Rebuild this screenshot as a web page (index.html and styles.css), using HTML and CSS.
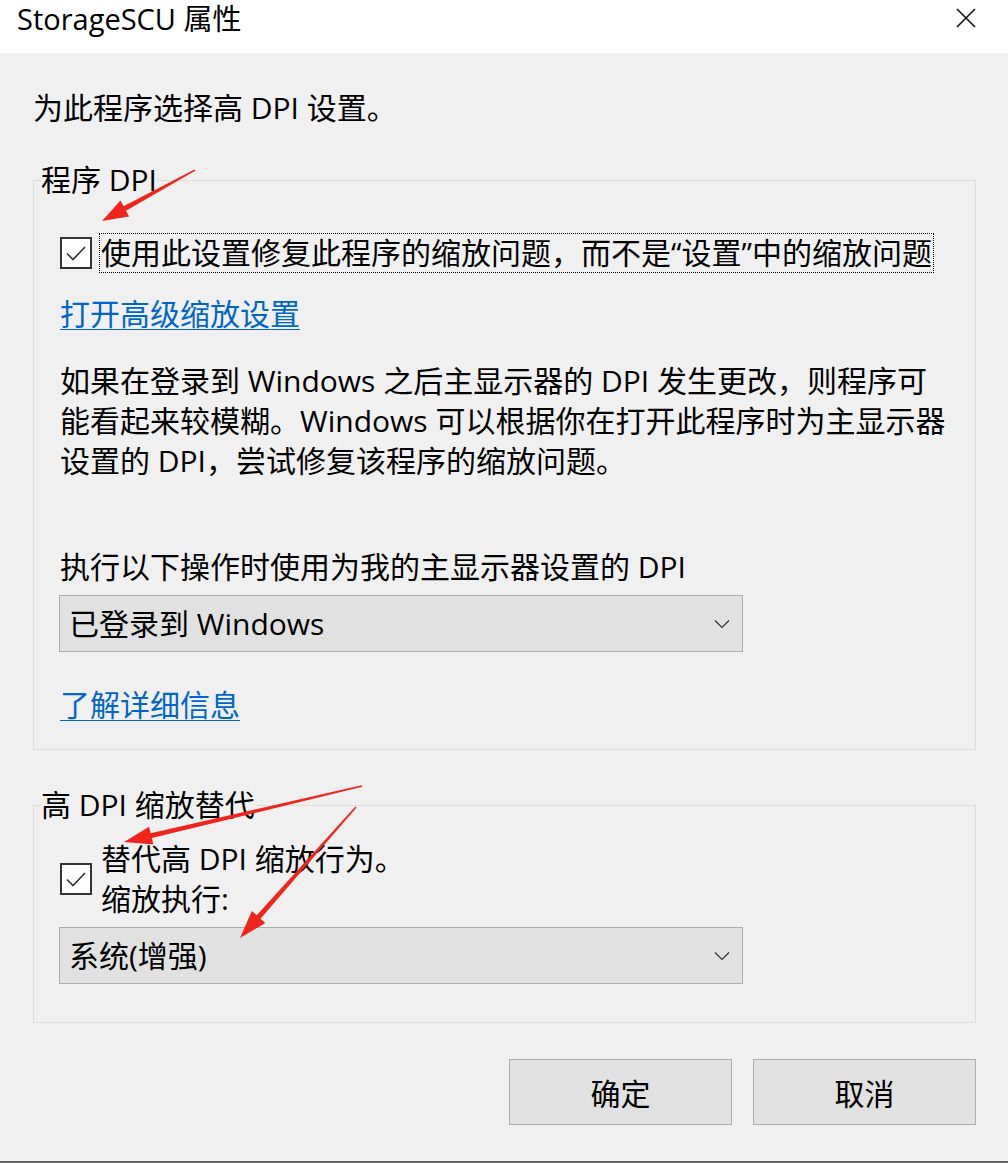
FILE: index.html
```html
<!DOCTYPE html>
<html lang="zh-CN">
<head>
<meta charset="utf-8">
<title>StorageSCU 属性</title>
<link rel="stylesheet" href="styles.css">
</head>
<body>
<div class="window">
  <div class="titlebar">
    <span class="title">StorageSCU 属性</span>
    <svg class="close" width="20" height="20" viewBox="0 0 20 20"><path d="M1 1 L19 19 M19 1 L1 19" stroke="#111" stroke-width="1.6" fill="none"/></svg>
  </div>
  <div class="content">
    <p class="intro">为此程序选择高 DPI 设置。</p>

    <fieldset class="group group-dpi">
      <legend class="legend">程序 DPI</legend>
      <div class="check-row">
        <span class="checkbox"><svg width="32" height="32" viewBox="0 0 32 32"><rect x="1" y="1" width="30" height="30" fill="#fff" stroke="#333" stroke-width="2"/><path d="M7 16.5 L13 22.5 L25 10" stroke="#333" stroke-width="1.6" fill="none"/></svg></span>
        <span class="check-label focus">使用此设置修复此程序的缩放问题，而不是“设置”中的缩放问题</span>
      </div>
      <a class="link link-adv" href="#">打开高级缩放设置</a>
      <p class="para">如果在登录到 Windows 之后主显示器的 DPI 发生更改，则程序可<br>能看起来较模糊。Windows 可以根据你在打开此程序时为主显示器<br>设置的 DPI，尝试修复该程序的缩放问题。</p>
      <p class="label">执行以下操作时使用为我的主显示器设置的 DPI</p>
      <div class="select">
        <span class="select-text">已登录到 Windows</span>
        <svg class="chev" width="16" height="10" viewBox="0 0 16 10"><path d="M1 1.5 L8 8.5 L15 1.5" stroke="#333" stroke-width="1.2" fill="none"/></svg>
      </div>
      <a class="link link-more" href="#">了解详细信息</a>
    </fieldset>

    <fieldset class="group group-override">
      <legend class="legend">高 DPI 缩放替代</legend>
      <div class="check-row check-row-2">
        <span class="checkbox"><svg width="32" height="32" viewBox="0 0 32 32"><rect x="1" y="1" width="30" height="30" fill="#fff" stroke="#333" stroke-width="2"/><path d="M7 16.5 L13 22.5 L25 10" stroke="#333" stroke-width="1.6" fill="none"/></svg></span>
        <span class="check-label">替代高 DPI 缩放行为。<br>缩放执行:</span>
      </div>
      <div class="select select-2">
        <span class="select-text">系统(增强)</span>
        <svg class="chev" width="16" height="10" viewBox="0 0 16 10"><path d="M1 1.5 L8 8.5 L15 1.5" stroke="#333" stroke-width="1.2" fill="none"/></svg>
      </div>
    </fieldset>

    <div class="buttons">
      <button class="btn">确定</button>
      <button class="btn">取消</button>
    </div>
  </div>
  <div class="bottom-line"></div>

  <svg class="annotations" width="1008" height="1163" viewBox="0 0 1008 1163">
    <polygon fill="#f1241c" points="195.6,170.6 126.0,210.7 129.1,216.4 102,221 120.5,200.6 123.6,206.3 194.4,169.4"/>
    <polygon fill="#f1241c" points="362.3,786.8 151.8,838.0 153.3,844.4 124,842 149.1,826.8 150.6,833.2 361.7,785.2"/>
    <polygon fill="#f1241c" points="356.6,807.6 260.5,918.7 265.3,923.0 240,938 251.9,911.0 256.7,915.3 355.4,806.4"/>
  </svg>
</div>
</body>
</html>
```

FILE: styles.css
```css
html, body {
  margin: 0;
  padding: 0;
}
body {
  background: #f0f0f0;
  font-family: "Open Sans", "Noto Sans CJK SC", sans-serif;
  font-size: 30px;
  color: #000;
}
.window {
  position: relative;
  width: 1008px;
  height: 1163px;
  background: #f0f0f0;
  overflow: hidden;
}
.titlebar {
  height: 53px;
  background: #fff;
  display: flex;
  justify-content: space-between;
  align-items: flex-start;
  padding: 0 32px 0 17px;
  box-sizing: border-box;
}
.title {
  line-height: 38px;
  font-size: 29px;
}
.close {
  margin-top: 8px;
}
.content {
  padding: 0 32px 0 33px;
}
.intro {
  margin: 35px 0 0;
  line-height: 40px;
}
.group {
  margin: 32px 0 0;
  padding: 0 10px 0 26px;
  border: 1px solid #dcdcdc;
  min-width: 0;
}
.legend {
  margin-left: -19px;
  padding: 0;
  line-height: 40px;
}
.check-row {
  display: flex;
  align-items: center;
  margin-top: 33px;
}
.checkbox {
  width: 32px;
  height: 32px;
  display: block;
  flex: none;
}
.checkbox svg {
  display: block;
}
.check-label {
  margin-left: 7px;
  padding: 0 1px;
  line-height: 38px;
  border: 1px solid transparent;
  white-space: nowrap;
}
.check-label.focus {
  border: 1px dotted #000;
}
.link {
  display: block;
  width: max-content;
  color: #0066cc;
  text-decoration: underline;
  text-underline-offset: 4px;
  text-decoration-thickness: 1px;
  line-height: 40px;
}
.link-adv {
  margin-top: 21px;
}
.para {
  margin: 27px 0 0;
  line-height: 40px;
  white-space: nowrap;
}
.label {
  margin: 66px 0 0;
  line-height: 40px;
}
.select {
  margin-top: 8px;
  margin-left: -1px;
  width: 684px;
  height: 57px;
  box-sizing: border-box;
  background: #e1e1e1;
  border: 1px solid #adadad;
  display: flex;
  align-items: center;
  justify-content: space-between;
  padding: 0 12px 0 9px;
}
.select-text {
  line-height: 40px;
}
.chev {
  display: block;
}
.link-more {
  margin-top: 33px;
}
.group-dpi {
  padding-bottom: 24px;
}
.group-override {
  margin-top: 35px;
  padding-bottom: 38px;
}
.check-row-2 {
  margin-top: 14px;
}
.check-row-2 .check-label {
  line-height: 40px;
  border: none;
  padding: 0 0 0 2px;
}
.select-2 {
  margin-top: 8px;
}
.buttons {
  display: flex;
  justify-content: flex-end;
  gap: 21px;
  margin-top: 36px;
}
.btn {
  width: 223px;
  height: 66px;
  background: #e1e1e1;
  border: 1px solid #adadad;
  font-family: inherit;
  font-size: 30px;
  color: #000;
  padding: 0;
}
.bottom-line {
  position: absolute;
  left: 0;
  right: 0;
  bottom: 0;
  height: 2px;
  background: #666;
}
.annotations {
  position: absolute;
  left: 0;
  top: 0;
  pointer-events: none;
}
```
